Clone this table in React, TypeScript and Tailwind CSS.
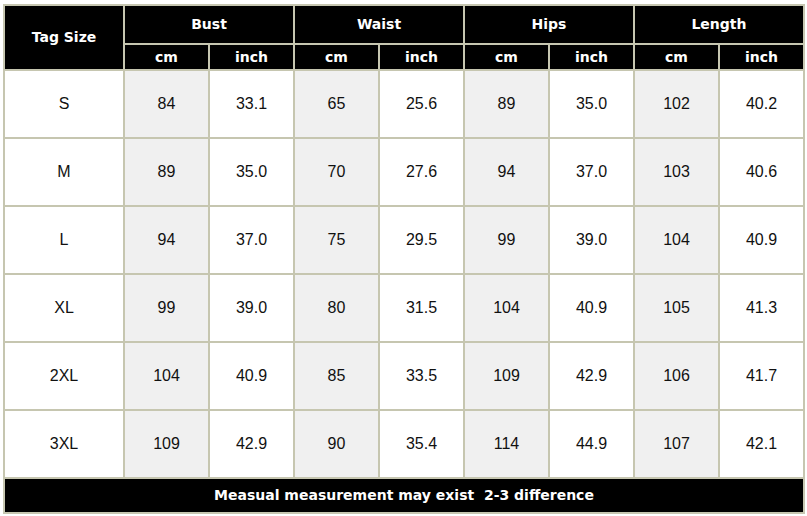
const groups = ["Bust", "Waist", "Hips", "Length"];

const rows: { size: string; values: string[] }[] = [
  { size: "S", values: ["84", "33.1", "65", "25.6", "89", "35.0", "102", "40.2"] },
  { size: "M", values: ["89", "35.0", "70", "27.6", "94", "37.0", "103", "40.6"] },
  { size: "L", values: ["94", "37.0", "75", "29.5", "99", "39.0", "104", "40.9"] },
  { size: "XL", values: ["99", "39.0", "80", "31.5", "104", "40.9", "105", "41.3"] },
  { size: "2XL", values: ["104", "40.9", "85", "33.5", "109", "42.9", "106", "41.7"] },
  { size: "3XL", values: ["109", "42.9", "90", "35.4", "114", "44.9", "107", "42.1"] },
];

const head = "bg-black text-white font-bold text-[14px] flex items-center justify-center font-['DejaVu_Sans',Verdana,sans-serif]";
const cell = "flex items-center justify-center text-[16px] text-[#111] font-['Liberation_Sans',Arial,sans-serif]";

export default function App() {
  return (
    <div className="w-[807px] h-[516px] bg-white pl-[3px] pt-[4px]">
      <div className="grid w-max grid-cols-[118px_repeat(8,83px)] grid-rows-[37px_24px_repeat(6,66px)_33px] gap-[2px] bg-[#c6c6b0] p-[2px]">
        <div className={`${head} row-span-2`}>Tag Size</div>
        {groups.map((g) => (
          <div key={g} className={`${head} col-span-2`}>
            {g}
          </div>
        ))}
        {groups.map((g) => [
          <div key={g + "cm"} className={head}>cm</div>,
          <div key={g + "in"} className={head}>inch</div>,
        ])}
        {rows.map((r) => [
          <div key={r.size} className={`${cell} bg-white`}>{r.size}</div>,
          ...r.values.map((v, i) => (
            <div
              key={r.size + i}
              className={`${cell} ${i % 2 === 0 ? "bg-[#f0f0f0]" : "bg-white"}`}
            >
              {v}
            </div>
          )),
        ])}
        <div className={`${head} col-span-9 whitespace-pre`}>
          Measual measurement may exist  2-3 difference
        </div>
      </div>
    </div>
  );
}
